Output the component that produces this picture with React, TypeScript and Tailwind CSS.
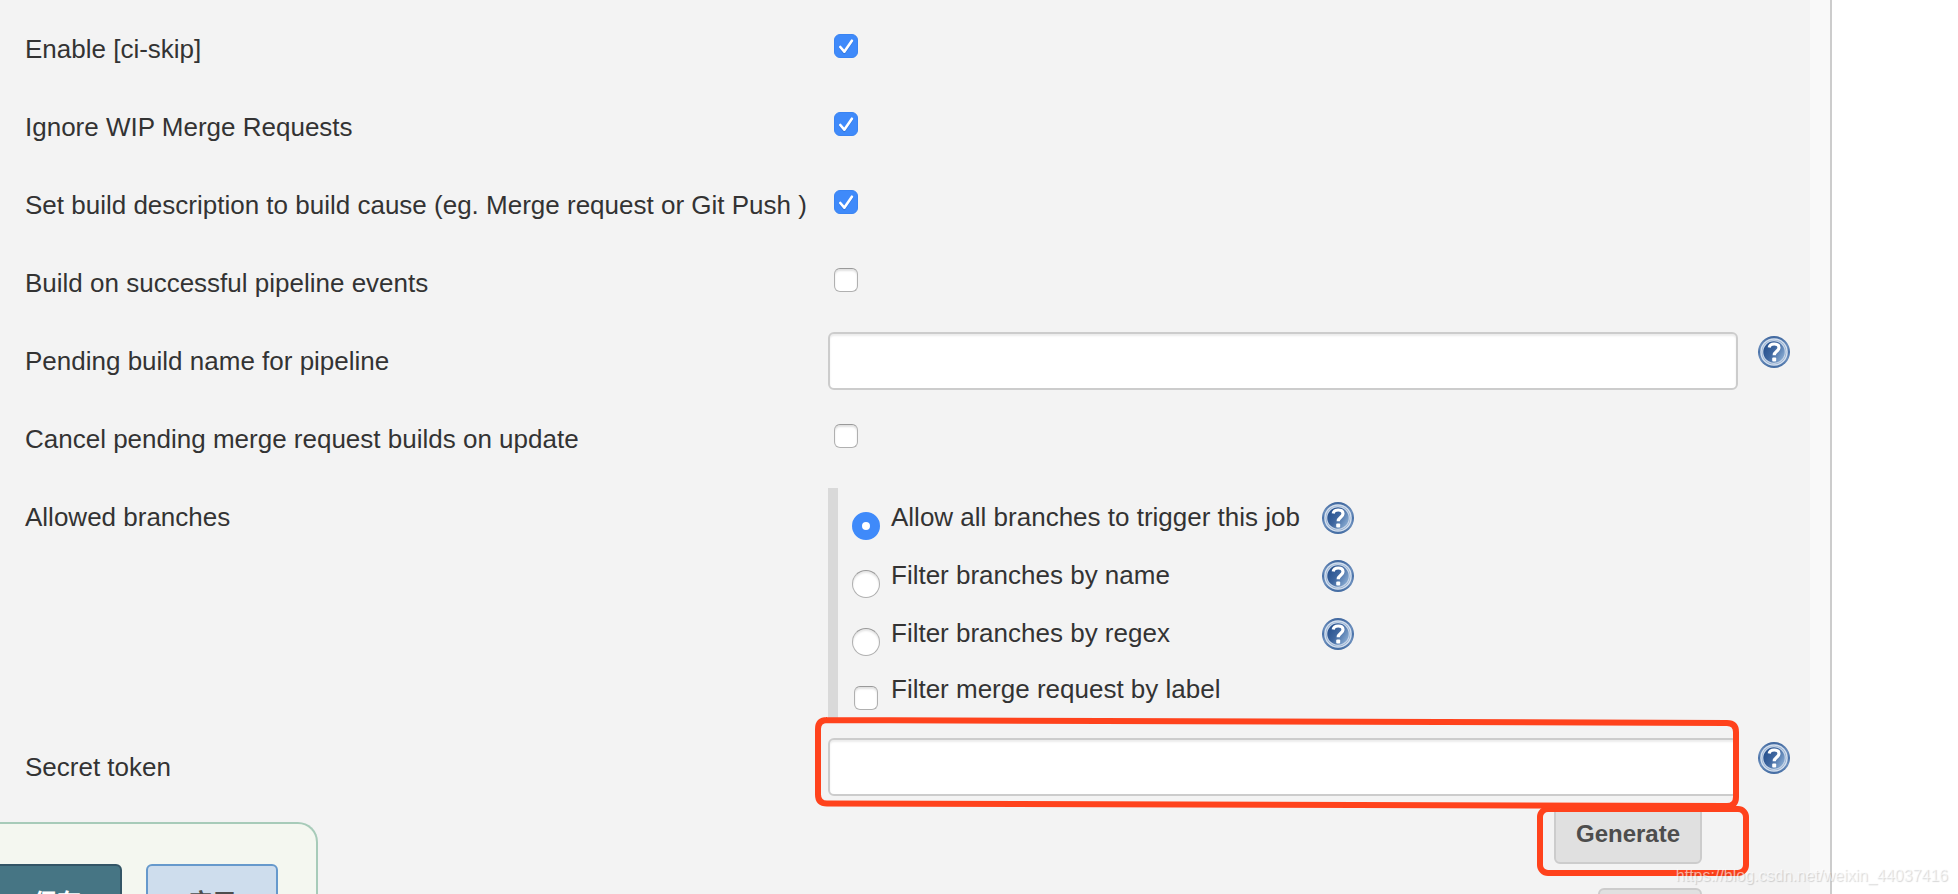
import { useState } from "react";

const toggles = [
  { id: "ci-skip", label: "Enable [ci-skip]", checked: true },
  { id: "ignore-wip", label: "Ignore WIP Merge Requests", checked: true },
  {
    id: "build-description",
    label: "Set build description to build cause (eg. Merge request or Git Push )",
    checked: true,
  },
  { id: "pipeline-events", label: "Build on successful pipeline events", checked: false },
];

const branchFilters = [
  { id: "all", label: "Allow all branches to trigger this job" },
  { id: "name", label: "Filter branches by name" },
  { id: "regex", label: "Filter branches by regex" },
];

const rowClass = "grid grid-cols-[803px_minmax(0,1fr)_72px] py-[10px]";
const labelClass = "leading-[58px] whitespace-nowrap";
const inputClass =
  "block h-[58px] w-full rounded-md border-2 border-[#cccccc] bg-white px-3 shadow-[inset_0_2px_2px_rgba(0,0,0,0.08)] outline-none";
const buttonClass =
  "h-[58px] rounded-md border-2 border-[#cccccc] bg-[#e0e0e0] pb-[2px] text-2xl font-bold text-[#4d4d4d]";

function HelpIcon({ topic }: { topic: string }) {
  const id = topic.replace(/\W+/g, "-");

  return (
    <button type="button" aria-label={`Help: ${topic}`} className="block h-8 w-8">
      <svg viewBox="0 0 32 32" className="h-8 w-8">
        <defs>
          <linearGradient id={`ring-${id}`} x1="0" y1="0" x2="0" y2="1">
            <stop offset="0" stopColor="#3d659d" />
            <stop offset="0.3" stopColor="#6c8fbd" />
            <stop offset="0.5" stopColor="#4a72a9" />
            <stop offset="0.7" stopColor="#6c8fbd" />
            <stop offset="1" stopColor="#416aa1" />
          </linearGradient>
          <linearGradient id={`disc-${id}`} x1="0" y1="0.2" x2="1" y2="0.8">
            <stop offset="0" stopColor="#234d8b" />
            <stop offset="0.45" stopColor="#3e669f" />
            <stop offset="1" stopColor="#92b4d9" />
          </linearGradient>
        </defs>
        <circle cx="16" cy="16" r="16" fill={`url(#ring-${id})`} />
        <circle cx="16" cy="16" r="13.8" fill="#d3dfee" />
        <circle cx="16" cy="16" r="12.3" fill="#7f9dc6" />
        <circle cx="16" cy="16" r="11.3" fill={`url(#disc-${id})`} stroke="#c5d4e7" strokeWidth="1.2" />
        <path
          d="M11.2 11.4C11.6 9 13.6 8 16.2 8c3 0 4.8 1.4 4.8 3.8 0 3.4-4.8 3.6-4.8 7.4"
          fill="none"
          stroke="#fff"
          strokeWidth="3.2"
        />
        <rect x="14.2" y="21.6" width="4" height="4" rx="1" fill="#fff" />
      </svg>
    </button>
  );
}

function Checkbox({ id, defaultChecked = false }: { id: string; defaultChecked?: boolean }) {
  return (
    <span className="grid h-6 w-6">
      <input
        id={id}
        type="checkbox"
        defaultChecked={defaultChecked}
        className="peer col-start-1 row-start-1 h-6 w-6 appearance-none rounded-[6px] border border-[#b0b0b0] border-t-[#999999] bg-white shadow-[inset_0_2px_2px_rgba(0,0,0,0.12)] checked:border-[#3a84f2] checked:bg-[#3f8afa] checked:shadow-none"
      />
      <svg
        viewBox="0 0 24 24"
        className="pointer-events-none invisible col-start-1 row-start-1 h-6 w-6 peer-checked:visible"
      >
        <path
          d="M6.3 14.2 10.3 19 18 7.8"
          fill="none"
          stroke="#2463c4"
          strokeOpacity="0.5"
          strokeWidth="2.4"
          strokeLinecap="round"
          strokeLinejoin="round"
        />
        <path
          d="M6.3 13 10.3 17.7 17.9 6.7"
          fill="none"
          stroke="#fff"
          strokeWidth="2.6"
          strokeLinecap="round"
          strokeLinejoin="round"
        />
      </svg>
    </span>
  );
}

function ToggleRow({ id, label, checked }: { id: string; label: string; checked: boolean }) {
  return (
    <div className={rowClass}>
      <label htmlFor={id} className={labelClass}>
        {label}
      </label>
      <div className="pt-[14px] pl-[6px]">
        <Checkbox id={id} defaultChecked={checked} />
      </div>
    </div>
  );
}

export default function App() {
  const [filter, setFilter] = useState("all");

  return (
    <div className="relative h-screen overflow-hidden bg-white font-['Liberation_Sans',Arial,sans-serif] text-[26px] text-[#333333]">
      <main className="mr-[126px] min-h-full border-r-2 border-[#cccccc] bg-[#f9f9f9] pr-5">
        <form className="min-h-screen bg-[#f3f3f3] pt-[10px] pl-[25px]">
          {toggles.map((toggle) => (
            <ToggleRow key={toggle.id} {...toggle} />
          ))}

          <div className={rowClass}>
            <label htmlFor="pending-name" className={labelClass}>
              Pending build name for pipeline
            </label>
            <input id="pending-name" type="text" className={inputClass} />
            <div className="pt-1 pl-5">
              <HelpIcon topic="Pending build name" />
            </div>
          </div>

          <ToggleRow
            id="cancel-pending"
            label="Cancel pending merge request builds on update"
            checked={false}
          />

          {/* Allowed branches */}
          <div className={rowClass} role="radiogroup" aria-labelledby="allowed-branches">
            <span id="allowed-branches" className={labelClass}>
              Allowed branches
            </span>
            <div className="border-l-[10px] border-[#d9d9d9] pl-[14px]">
              {branchFilters.map(({ id, label }) => (
                <div key={id} className="grid h-[58px] grid-cols-[39px_431px_32px]">
                  <input
                    id={`branch-${id}`}
                    type="radio"
                    name="branch-filter"
                    checked={filter === id}
                    onChange={() => setFilter(id)}
                    className="mt-6 h-7 w-7 appearance-none rounded-full border border-[#b0b0b0] border-t-[#999999] bg-white shadow-[inset_0_2px_2px_rgba(0,0,0,0.1)] checked:border-[10px] checked:border-[#3f8afa] checked:shadow-none"
                  />
                  <label htmlFor={`branch-${id}`} className={labelClass}>
                    {label}
                  </label>
                  <div className="pt-[14px]">
                    <HelpIcon topic={label} />
                  </div>
                </div>
              ))}
              <div className="grid h-14 grid-cols-[39px_431px]">
                <div className="pt-6 pl-[2px]">
                  <Checkbox id="branch-label" />
                </div>
                <label htmlFor="branch-label" className="leading-[54px]">
                  Filter merge request by label
                </label>
              </div>
            </div>
          </div>

          {/* Secret token, circled by hand */}
          <div className={rowClass}>
            <label htmlFor="secret-token" className={labelClass}>
              Secret token
            </label>
            <div className="relative">
              <input id="secret-token" type="text" className={inputClass} />
              <svg
                viewBox="0 0 924 92"
                preserveAspectRatio="none"
                className="pointer-events-none absolute -top-[21px] -left-[13px] z-10 h-[92px] w-[calc(100%+14px)]"
              >
                <path
                  d="M11 3 L912 6 Q921 6 921 15 L921 80 Q921 89 912 89 L12 86.500 Q3 86.500 3 77.500 L3 12 Q3 3 12 3 Z"
                  fill="none"
                  stroke="#ff421c"
                  strokeWidth="6"
                />
              </svg>
            </div>
            <div className="pt-1 pl-5">
              <HelpIcon topic="Secret token" />
            </div>
          </div>

          <div className="mr-[108px] flex flex-col items-end gap-6">
            <div className="relative">
              <button type="button" className={`${buttonClass} block w-[148px]`}>
                Generate
              </button>
              <div className="pointer-events-none absolute top-0 -right-[47px] h-[70px] w-[212px] rounded-[11px] border-[6px] border-[#ff421c]" />
            </div>
            <button type="button" aria-label="Clear" className={`${buttonClass} w-[104px]`} />
          </div>
        </form>
      </main>

      {/* Sticky save bar */}
      <div className="absolute bottom-0 left-0 flex h-[72px] w-[318px] items-start gap-6 overflow-hidden rounded-tr-[20px] border-t-2 border-r-2 border-[#a7cbb9] bg-[#f4f7f0] pt-10 font-['Liberation_Sans','Noto_Sans_CJK_SC',sans-serif] text-2xl font-bold">
        <button
          type="button"
          className="-ml-2 h-[78px] w-[130px] shrink-0 rounded-md border-2 border-[#335566] bg-[#467584] text-white"
        >
          保存
        </button>
        <button
          type="button"
          className="h-[78px] w-[132px] shrink-0 rounded-md border-2 border-[#6699cc] bg-[#cedded] text-[#4d4d4d]"
        >
          应用
        </button>
      </div>

      <div className="pointer-events-none absolute right-[10px] bottom-[6px] z-20 text-base leading-6 text-white/60 [text-shadow:1px_1px_1px_rgba(0,0,0,0.16)]">
        https://blog.csdn.net/weixin_44037416
      </div>
    </div>
  );
}
